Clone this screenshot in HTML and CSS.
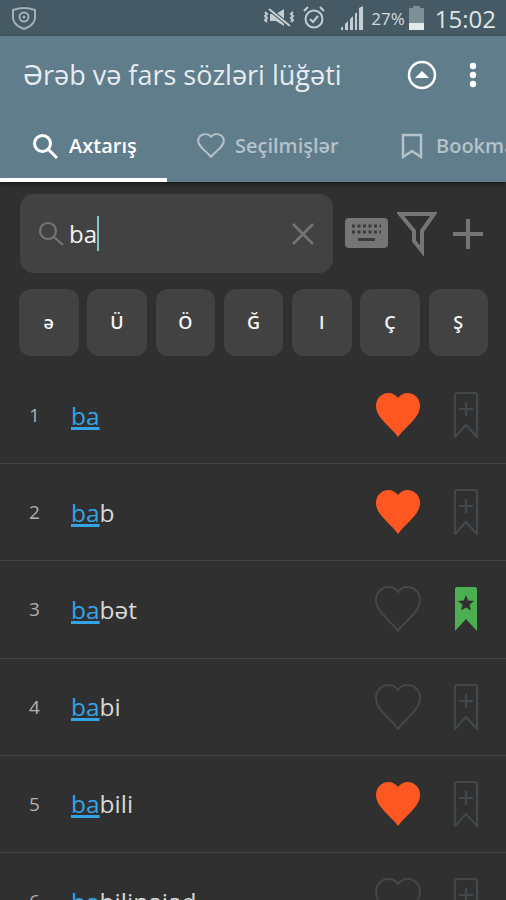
FILE: index.html
```html
<!DOCTYPE html>
<html lang="en">
<head>
    <meta charset="UTF-8">
    <meta name="viewport" content="width=device-width, initial-scale=1.0">
    <title>Ərəb və fars sözləri lüğəti</title>
    <link rel="stylesheet" href="styles.css">
</head>
<body>
    <svg class="defs">
        <defs>
            <path id="heart" d="M22 44 L18.500 39.500 C9 29.500 0 22.500 0 13 C0 5.500 5.500 0 12.500 0 C16.200 0 20 2 22 5 C24 2 27.800 0 31.500 0 C38.500 0 44 5.500 44 13 C44 22.500 35 29.500 25.500 39.500 Z"/>
            <path id="mark" d="M2 3 Q2 1 4 1 H22 Q24 1 24 3 V45 L13 33 L2 45 Z"/>
        </defs>
    </svg>

    <div class="phone">
        <div class="status">
            <svg width="26" height="26" viewBox="0 0 26 26" fill="none" stroke="#a3b0b6" stroke-width="2"><path d="M2 5 Q13 1 24 5 V14 Q22 21 13 24 Q4 21 2 14 Z"/><circle cx="13" cy="12" r="4.5"/><circle cx="13" cy="12" r="1.5" fill="#a3b0b6" stroke="none"/></svg>
            <div class="status-right">
                <svg width="32" height="24" viewBox="0 0 32 24" fill="none" stroke="#c4ced2" stroke-width="2"><path d="M2 6 l2 2 -2 2 2 2 -2 2 2 2M30 6 l-2 2 2 2 -2 2 2 2 -2 2"/><path d="M7 8 H13 L21 3 V20 L13 15 H7 Z" fill="#c4ced2" stroke="none"/><path d="M6 3 L27 20" stroke="#455a64" stroke-width="4"/><path d="M6 3 L27 20"/></svg>
                <svg width="24" height="26" viewBox="0 0 24 26" fill="none" stroke="#c4ced2" stroke-width="2"><circle cx="12" cy="14" r="8.5"/><path d="M2 6 L6 2M22 6 L18 2M8 14 L11 17 L16 11"/></svg>
                <svg class="signal" width="23" height="24" viewBox="0 0 23 24" fill="#c4ced2"><path d="M0 24 v-2 l2 -2 v4zM4 24 v-6 l3 -3 v9zM9 24 v-11 l3 -3 v14zM14 24 v-16 l2 -2 v18zM18 24 v-22 l4 -2 v24z"/></svg>
                <span class="battery-text">27%</span>
                <svg width="15" height="24" viewBox="0 0 15 24"><path d="M4 0 h7 v2 h4 v22 h-15 v-22 h4z" fill="#7d8f97"/><rect y="17" width="15" height="7" fill="#e4e9eb"/></svg>
                <span class="clock">15:02</span>
            </div>
        </div>

        <div class="appbar">
            <div class="appbar-top">
                <h1 class="title">Ərəb və fars sözləri lüğəti</h1>
                <svg width="30" height="30" viewBox="0 0 30 30"><circle cx="15" cy="15" r="13" fill="none" stroke="#fff" stroke-width="2.5"/><path d="M8 18 L15 11 L22 18 Z" fill="#fff"/></svg>
                <svg class="more" width="8" height="26" viewBox="0 0 8 26" fill="#fff"><circle cx="4" cy="4" r="3.2"/><circle cx="4" cy="13" r="3.2"/><circle cx="4" cy="22" r="3.2"/></svg>
            </div>
            <div class="tabs">
                <div class="tab tab-active">
                    <svg width="26" height="26" viewBox="0 0 26 26" fill="none" stroke="#fff" stroke-width="3"><circle cx="10.5" cy="10.5" r="8"/><path d="M16.5 16.5 L25 25"/></svg>
                    <span>Axtarış</span>
                </div>
                <div class="tab tab-heart">
                    <svg width="28" height="25" viewBox="-2 -2 48 48" preserveAspectRatio="none" fill="none" stroke="#b4c2c9" stroke-width="3.5"><use href="#heart"/></svg>
                    <span>Seçilmişlər</span>
                </div>
                <div class="tab tab-mark">
                    <svg width="22" height="26" viewBox="0 0 22 26" fill="none" stroke="#b4c2c9" stroke-width="2.5"><path d="M2 2 H20 V24 L11 18 L2 24 Z"/></svg>
                    <span>Bookmarks</span>
                </div>
            </div>
        </div>

        <div class="search-row">
            <div class="search-box">
                <svg width="26" height="26" viewBox="0 0 26 26" fill="none" stroke="#757575" stroke-width="2.2"><circle cx="10" cy="10" r="8"/><path d="M16 16 L25 24"/></svg>
                <span class="query">ba</span><span class="caret"></span>
                <svg class="clear" width="22" height="22" viewBox="0 0 22 22" fill="none" stroke="#757575" stroke-width="2.5"><path d="M1 1 L21 21M21 1 L1 21"/></svg>
            </div>
            <svg width="43" height="31" viewBox="0 0 43 31"><rect width="43" height="30" rx="4" fill="#757575"/><path d="M7 8 h29M7 14 h29" stroke="#3a3a3a" stroke-width="3" stroke-dasharray="3 2.5"/><rect x="13" y="20" width="17" height="3" fill="#3a3a3a"/></svg>
            <svg class="filter" width="40" height="46" viewBox="0 0 40 46" fill="none" stroke="#757575" stroke-width="4"><path d="M3 3 H37 L25 20 V40 L17 30 V20 Z"/></svg>
            <svg class="plus" width="30" height="30" viewBox="0 0 30 30" stroke="#757575" stroke-width="4"><path d="M15 0 V30M0 15 H30"/></svg>
        </div>

        <div class="keys">
            <div class="key">ə</div>
            <div class="key">Ü</div>
            <div class="key">Ö</div>
            <div class="key">Ğ</div>
            <div class="key">I</div>
            <div class="key">Ç</div>
            <div class="key">Ş</div>
        </div>

        <div class="list">
            <div class="row">
                <span class="num">1</span>
                <span class="word"><u>ba</u></span>
                <svg class="heart" width="46" height="46" viewBox="-1 -1 46 46"><use href="#heart" class="heart-on"/></svg>
                <svg width="26" height="46" viewBox="0 0 26 46"><use href="#mark" class="mark-off"/><path class="mark-off" d="M13 10 V24M6 17 H20"/></svg>
            </div>
            <div class="row">
                <span class="num">2</span>
                <span class="word"><u>ba</u>b</span>
                <svg class="heart" width="46" height="46" viewBox="-1 -1 46 46"><use href="#heart" class="heart-on"/></svg>
                <svg width="26" height="46" viewBox="0 0 26 46"><use href="#mark" class="mark-off"/><path class="mark-off" d="M13 10 V24M6 17 H20"/></svg>
            </div>
            <div class="row">
                <span class="num">3</span>
                <span class="word"><u>ba</u>bət</span>
                <svg class="heart" width="46" height="46" viewBox="-1 -1 46 46"><use href="#heart" class="heart-off"/></svg>
                <svg width="26" height="46" viewBox="0 0 26 46"><use href="#mark" class="mark-on"/><path d="M13 9 L15.2 14.5 L21 15 L16.5 18.8 L18 24.5 L13 21.4 L8 24.5 L9.5 18.8 L5 15 L10.8 14.5 Z" fill="#303030"/></svg>
            </div>
            <div class="row">
                <span class="num">4</span>
                <span class="word"><u>ba</u>bi</span>
                <svg class="heart" width="46" height="46" viewBox="-1 -1 46 46"><use href="#heart" class="heart-off"/></svg>
                <svg width="26" height="46" viewBox="0 0 26 46"><use href="#mark" class="mark-off"/><path class="mark-off" d="M13 10 V24M6 17 H20"/></svg>
            </div>
            <div class="row">
                <span class="num">5</span>
                <span class="word"><u>ba</u>bili</span>
                <svg class="heart" width="46" height="46" viewBox="-1 -1 46 46"><use href="#heart" class="heart-on"/></svg>
                <svg width="26" height="46" viewBox="0 0 26 46"><use href="#mark" class="mark-off"/><path class="mark-off" d="M13 10 V24M6 17 H20"/></svg>
            </div>
            <div class="row">
                <span class="num">6</span>
                <span class="word"><u>ba</u>bilinaiad</span>
                <svg class="heart" width="46" height="46" viewBox="-1 -1 46 46"><use href="#heart" class="heart-off"/></svg>
                <svg width="26" height="46" viewBox="0 0 26 46"><use href="#mark" class="mark-off"/><path class="mark-off" d="M13 10 V24M6 17 H20"/></svg>
            </div>
        </div>
    </div>
</body>
</html>
```

FILE: styles.css
```css
html, body {
    margin: 0;
    padding: 0;
    background: #303030;
}
body {
    font-family: "Open Sans", "Noto Sans", sans-serif;
}
.defs {
    display: none;
}
.phone {
    width: 506px;
    height: 900px;
    overflow: hidden;
}

/* status bar */
.status {
    height: 36px;
    background: #455a64;
    display: flex;
    align-items: center;
    justify-content: space-between;
    padding: 0 10px 0 11px;
    box-sizing: border-box;
}
.status-right {
    display: flex;
    align-items: center;
    color: #d5dcdf;
}
.status-right > svg:first-child {
    margin-right: 7px;
}
.signal {
    margin-left: 15px;
}
.battery-text {
    font-size: 17px;
    margin: 0 4px 0 7px;
}
.clock {
    font-size: 24px;
    margin-left: 11px;
    color: #dfe5e7;
}

/* app bar */
.appbar {
    height: 146px;
    background: #607d8b;
    position: relative;
    box-shadow: 0 2px 5px rgba(0, 0, 0, 0.5);
}
.appbar-top {
    height: 77px;
    display: flex;
    align-items: center;
    padding: 0 29px 0 23px;
}
.title {
    flex: 1;
    margin: 0;
    font-size: 27px;
    font-weight: 400;
    color: #e6ecef;
}
.more {
    margin-left: 32px;
}
.tabs {
    height: 69px;
    display: flex;
    overflow: hidden;
}
.tab {
    flex: none;
    height: 69px;
    box-sizing: border-box;
    display: flex;
    align-items: center;
    gap: 11px;
    font-size: 20px;
    font-weight: 600;
    color: #b4c2c9;
    padding-bottom: 4px;
    white-space: nowrap;
}
.tab-active {
    width: 167px;
    padding-left: 32px;
    padding-bottom: 0;
    color: #fff;
    border-bottom: 4px solid #fff;
}
.tab-heart {
    width: 234px;
    padding-left: 30px;
    gap: 10px;
}
.tab-mark {
    gap: 13px;
}

/* search */
.search-row {
    display: flex;
    align-items: center;
    padding: 12px 0 0 20px;
}
.search-box {
    width: 313px;
    height: 79px;
    background: #424242;
    border-radius: 14px;
    box-sizing: border-box;
    display: flex;
    align-items: center;
    padding: 0 19px 0 18px;
    margin-right: 12px;
}
.query {
    font-size: 24px;
    color: #f5f5f5;
    margin-left: 5px;
}
.caret {
    width: 2px;
    height: 35px;
    background: #80cbc4;
}
.clear {
    margin-left: auto;
}
.filter {
    margin-left: 9px;
}
.plus {
    margin-left: 16px;
}
.keys {
    display: flex;
    gap: 8.75px;
    padding: 16px 0 0 19px;
}
.key {
    width: 59.5px;
    height: 67px;
    background: #424242;
    border-radius: 12px;
    display: flex;
    align-items: center;
    justify-content: center;
    color: #f5f5f5;
    font-size: 18px;
    font-weight: 600;
    padding-bottom: 2px;
    box-sizing: border-box;
}

/* list */
.list {
    margin-top: 11px;
}
.row {
    height: 97.2px;
    box-sizing: border-box;
    border-bottom: 1px solid #424242;
    display: flex;
    align-items: center;
    padding-right: 27px;
    padding-left: 29px;
}
.num {
    width: 42px;
    font-size: 19px;
    color: #b0b0b0;
}
.word {
    flex: 1;
    font-size: 24.5px;
    font-weight: 500;
    color: #d8d8d8;
}
.word u {
    color: #33a4e8;
    text-decoration-thickness: 2.5px;
}
.heart {
    margin-right: 32px;
}
.heart-on {
    fill: #ff5722;
}
.heart-off {
    fill: none;
    stroke: #444749;
    stroke-width: 2;
}
.mark-off {
    fill: none;
    stroke: #41474b;
    stroke-width: 2.2;
}
.mark-on {
    fill: #4caf50;
}
```
